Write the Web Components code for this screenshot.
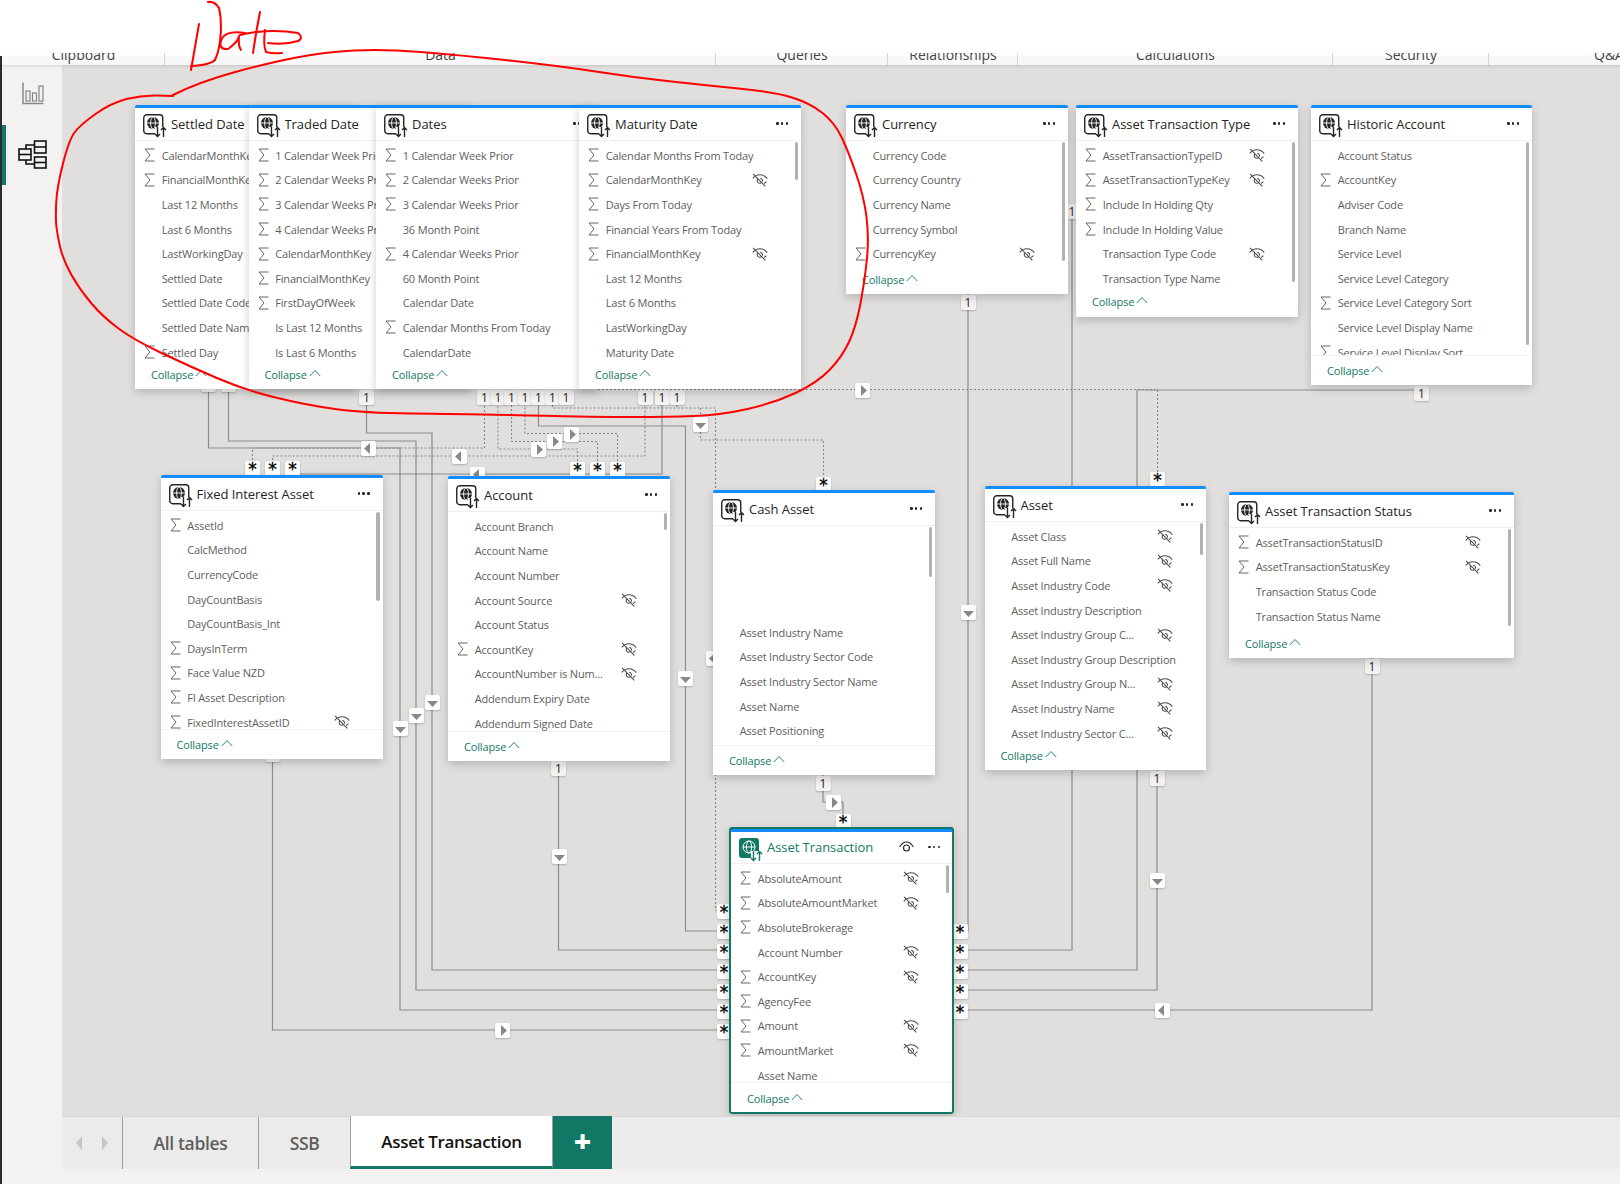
<!DOCTYPE html>
<html lang="en">
<head>
<meta charset="UTF-8" />
<title>Model view</title>
<style>
    html, body { margin: 0; height: 100%; }
    body { font-family: "Open Sans", "Liberation Sans", sans-serif; background: #fff; overflow: hidden; }
</style>
</head>
<body>
<model-app>
    <ribbon-strip slot="ribbon">
        <ribbon-group style="width:163px">Clipboard</ribbon-group>
        <ribbon-group style="width:551px">Data</ribbon-group>
        <ribbon-group style="width:172px">Queries</ribbon-group>
        <ribbon-group style="width:130px">Relationships</ribbon-group>
        <ribbon-group style="width:315px">Calculations</ribbon-group>
        <ribbon-group style="width:156px">Security</ribbon-group>
        <ribbon-group style="width:240px">Q&amp;A</ribbon-group>
    </ribbon-strip>
    <view-rail slot="rail"></view-rail>
    <model-canvas slot="canvas">
        <!-- relation lines: page coordinates, the svg viewBox takes off the canvas origin -->
        <rel-lines></rel-lines>

        <rel-mark x="208.5" y="384">1</rel-mark><rel-mark x="228.5" y="384">1</rel-mark>
        <rel-mark x="366.5" y="397">1</rel-mark>
        <rel-mark x="484.5" y="397">1</rel-mark><rel-mark x="498" y="397">1</rel-mark><rel-mark x="511.5" y="397">1</rel-mark>
        <rel-mark x="525" y="397">1</rel-mark><rel-mark x="538.5" y="397">1</rel-mark><rel-mark x="552.5" y="397">1</rel-mark>
        <rel-mark x="566" y="397">1</rel-mark>
        <rel-mark x="645" y="397">1</rel-mark><rel-mark x="662" y="397">1</rel-mark><rel-mark x="677" y="397">1</rel-mark>
        <rel-mark x="968" y="302">1</rel-mark><rel-mark x="1072" y="211">1</rel-mark><rel-mark x="1421.5" y="393">1</rel-mark>
        <rel-mark x="272.5" y="754">1</rel-mark><rel-mark x="558.5" y="768">1</rel-mark><rel-mark x="823" y="783">1</rel-mark>
        <rel-mark x="1157" y="778">1</rel-mark><rel-mark x="1372" y="666">1</rel-mark>

        <rel-mark x="252.5" y="468" many>*</rel-mark><rel-mark x="272.5" y="468" many>*</rel-mark><rel-mark x="292.5" y="468" many>*</rel-mark>
        <rel-mark x="577.5" y="469" many>*</rel-mark><rel-mark x="597.5" y="469" many>*</rel-mark><rel-mark x="617.5" y="469" many>*</rel-mark>
        <rel-mark x="823.5" y="484" many>*</rel-mark><rel-mark x="1157.5" y="479" many>*</rel-mark><rel-mark x="843" y="821" many>*</rel-mark>
        <rel-mark x="724" y="911" many>*</rel-mark><rel-mark x="724" y="931" many>*</rel-mark><rel-mark x="724" y="951" many>*</rel-mark>
        <rel-mark x="724" y="971" many>*</rel-mark><rel-mark x="724" y="991" many>*</rel-mark><rel-mark x="724" y="1011" many>*</rel-mark>
        <rel-mark x="724" y="1031" many>*</rel-mark>
        <rel-mark x="960" y="931" many>*</rel-mark><rel-mark x="960" y="951" many>*</rel-mark><rel-mark x="960" y="971" many>*</rel-mark>
        <rel-mark x="960" y="991" many>*</rel-mark><rel-mark x="960" y="1011" many>*</rel-mark>

        <rel-mark x="368.5" y="448" dir="left"></rel-mark><rel-mark x="459" y="456" dir="left"></rel-mark><rel-mark x="477" y="474" dir="left"></rel-mark>
        <rel-mark x="538" y="449" dir="right"></rel-mark><rel-mark x="554.5" y="441.5" dir="right"></rel-mark><rel-mark x="571" y="434" dir="right"></rel-mark>
        <rel-mark x="700.5" y="424" dir="down"></rel-mark><rel-mark x="862" y="390" dir="right"></rel-mark>
        <rel-mark x="968" y="612" dir="down"></rel-mark><rel-mark x="685" y="678" dir="down"></rel-mark><rel-mark x="713.5" y="658" dir="left"></rel-mark>
        <rel-mark x="432" y="702" dir="down"></rel-mark><rel-mark x="416" y="715" dir="down"></rel-mark><rel-mark x="400" y="728" dir="down"></rel-mark>
        <rel-mark x="559" y="856" dir="down"></rel-mark><rel-mark x="833" y="802" dir="right"></rel-mark>
        <rel-mark x="502" y="1030" dir="right"></rel-mark><rel-mark x="1157" y="880" dir="down"></rel-mark><rel-mark x="1162" y="1010" dir="left"></rel-mark>

        <table-card x="135" y="105" w="222" h="284" name="Settled Date">
            <table-field sum>CalendarMonthKey</table-field><table-field sum>FinancialMonthKey</table-field>
            <table-field>Last 12 Months</table-field><table-field>Last 6 Months</table-field><table-field>LastWorkingDay</table-field>
            <table-field>Settled Date</table-field><table-field>Settled Date Code</table-field><table-field>Settled Date Name</table-field>
            <table-field sum>Settled Day</table-field>
        </table-card>
        <table-card x="248.5" y="105" w="222" h="284" name="Traded Date">
            <table-field sum>1 Calendar Week Prior</table-field><table-field sum>2 Calendar Weeks Prior</table-field>
            <table-field sum>3 Calendar Weeks Prior</table-field><table-field sum>4 Calendar Weeks Prior</table-field>
            <table-field sum>CalendarMonthKey</table-field><table-field sum>FinancialMonthKey</table-field><table-field sum>FirstDayOfWeek</table-field>
            <table-field>Is Last 12 Months</table-field><table-field>Is Last 6 Months</table-field>
        </table-card>
        <table-card x="376" y="105" w="222" h="284" name="Dates">
            <table-field sum>1 Calendar Week Prior</table-field><table-field sum>2 Calendar Weeks Prior</table-field>
            <table-field sum>3 Calendar Weeks Prior</table-field><table-field>36 Month Point</table-field>
            <table-field sum>4 Calendar Weeks Prior</table-field><table-field>60 Month Point</table-field><table-field>Calendar Date</table-field>
            <table-field sum>Calendar Months From Today</table-field><table-field>CalendarDate</table-field>
        </table-card>
        <table-card x="579" y="105" w="222" h="284" name="Maturity Date" thumb="38">
            <table-field sum>Calendar Months From Today</table-field><table-field sum off>CalendarMonthKey</table-field>
            <table-field sum>Days From Today</table-field><table-field sum>Financial Years From Today</table-field>
            <table-field sum off>FinancialMonthKey</table-field><table-field>Last 12 Months</table-field><table-field>Last 6 Months</table-field>
            <table-field>LastWorkingDay</table-field><table-field>Maturity Date</table-field>
        </table-card>
        <table-card x="846" y="105" w="222" h="189" name="Currency" thumb="119">
            <table-field>Currency Code</table-field><table-field>Currency Country</table-field><table-field>Currency Name</table-field>
            <table-field>Currency Symbol</table-field><table-field sum off>CurrencyKey</table-field>
        </table-card>
        <table-card x="1076" y="105" w="222" h="212" name="Asset Transaction Type" thumb="140" foot="26">
            <table-field sum off>AssetTransactionTypeID</table-field><table-field sum off>AssetTransactionTypeKey</table-field>
            <table-field sum>Include In Holding Qty</table-field><table-field sum>Include In Holding Value</table-field>
            <table-field off>Transaction Type Code</table-field><table-field>Transaction Type Name</table-field>
        </table-card>
        <table-card x="1311" y="105" w="221" h="280" name="Historic Account" thumb="203" clipped>
            <table-field>Account Status</table-field><table-field sum>AccountKey</table-field><table-field>Adviser Code</table-field>
            <table-field>Branch Name</table-field><table-field>Service Level</table-field><table-field>Service Level Category</table-field>
            <table-field sum>Service Level Category Sort</table-field><table-field>Service Level Display Name</table-field>
            <table-field sum>Service Level Display Sort</table-field>
        </table-card>

        <table-card x="160.5" y="475" w="222" h="284" name="Fixed Interest Asset" thumb="89" clipped>
            <table-field sum>AssetId</table-field><table-field>CalcMethod</table-field><table-field>CurrencyCode</table-field>
            <table-field>DayCountBasis</table-field><table-field>DayCountBasis_Int</table-field><table-field sum>DaysInTerm</table-field>
            <table-field sum>Face Value NZD</table-field><table-field sum>FI Asset Description</table-field>
            <table-field sum off>FixedInterestAssetID</table-field>
        </table-card>
        <table-card x="448" y="476" w="222" h="285" name="Account" thumb="17" clipped>
            <table-field>Account Branch</table-field><table-field>Account Name</table-field><table-field>Account Number</table-field>
            <table-field off>Account Source</table-field><table-field>Account Status</table-field><table-field sum off>AccountKey</table-field>
            <table-field off>AccountNumber is Num...</table-field><table-field>Addendum Expiry Date</table-field><table-field>Addendum Signed Date</table-field>
        </table-card>
        <table-card x="713" y="490" w="222" h="285" name="Cash Asset" thumb="50" skip="94" clipped>
            <table-field>Asset Industry Name</table-field><table-field>Asset Industry Sector Code</table-field>
            <table-field>Asset Industry Sector Name</table-field><table-field>Asset Name</table-field><table-field>Asset Positioning</table-field>
        </table-card>
        <table-card x="984.5" y="486" w="221.5" h="284" name="Asset" thumb="32">
            <table-field off>Asset Class</table-field><table-field off>Asset Full Name</table-field><table-field off>Asset Industry Code</table-field>
            <table-field>Asset Industry Description</table-field><table-field off>Asset Industry Group C...</table-field>
            <table-field>Asset Industry Group Description</table-field><table-field off>Asset Industry Group N...</table-field>
            <table-field off>Asset Industry Name</table-field><table-field off>Asset Industry Sector C...</table-field>
        </table-card>
        <table-card x="1229" y="492" w="285" h="166" name="Asset Transaction Status" thumb="97">
            <table-field sum off>AssetTransactionStatusID</table-field><table-field sum off>AssetTransactionStatusKey</table-field>
            <table-field>Transaction Status Code</table-field><table-field>Transaction Status Name</table-field>
        </table-card>
        <table-card x="729" y="827" w="225" h="287" name="Asset Transaction" thumb="28" clipped active>
            <table-field sum off>AbsoluteAmount</table-field><table-field sum off>AbsoluteAmountMarket</table-field>
            <table-field sum>AbsoluteBrokerage</table-field><table-field off>Account Number</table-field>
            <table-field sum off>AccountKey</table-field><table-field sum>AgencyFee</table-field>
            <table-field sum off>Amount</table-field><table-field sum off>AmountMarket</table-field><table-field>Asset Name</table-field>
        </table-card>
    </model-canvas>
    <tab-bar slot="tabs">
        <layout-tab>All tables</layout-tab>
        <layout-tab style="width:92px">SSB</layout-tab>
        <layout-tab current style="width:203px">Asset Transaction</layout-tab>
    </tab-bar>
</model-app>
<red-ink></red-ink>

<script type="module">
    // origin of the canvas on the page
    const CX = 62, CY = 65;

    class ModelApp extends HTMLElement {
        constructor() {
            super();
            this.attachShadow({ mode: 'open' }).innerHTML = `
                <style>
                    :host { display: flex; flex-direction: column; height: 1184px; }
                    .top { height: 53px; flex: none; background: #fff; }
                    .main { flex: 1; min-height: 0; display: flex; border-left: 2px solid #2b2b2b; }
                    .col { flex: 1; min-width: 0; display: flex; flex-direction: column; }
                    .foot { height: 15px; flex: none; background: #f3f2f1; border-left: 2px solid #2b2b2b; }
                    slot[name=canvas]::slotted(*) { flex: 1; }
                </style>
                <div class="top"></div>
                <slot name="ribbon"></slot>
                <div class="main">
                    <slot name="rail"></slot>
                    <div class="col">
                        <slot name="canvas"></slot>
                        <slot name="tabs"></slot>
                    </div>
                </div>
                <div class="foot"></div>`;
        }
    }

    class RibbonStrip extends HTMLElement {
        constructor() {
            super();
            this.attachShadow({ mode: 'open' }).innerHTML = `
                <style>
                    :host { display: flex; height: 12px; flex: none; overflow: hidden; position: relative; z-index: 2;
                            background: linear-gradient(#fff 3px, #f9f8f8 3px); padding-left: 2px;
                            box-shadow: 0 1px 3px rgba(0,0,0,.12); }
                    :host::before { content: ""; position: absolute; left: 0; top: 3px; bottom: 0; width: 2px; background: #2b2b2b; }
                </style>
                <slot></slot>`;
        }
    }

    class RibbonGroup extends HTMLElement {
        constructor() {
            super();
            this.attachShadow({ mode: 'open' }).innerHTML = `
                <style>
                    :host { display: block; flex: none; box-sizing: border-box; text-align: center; color: #444; height: 22px;
                            font: 14px/14px "Open Sans", "Liberation Sans", sans-serif; margin-top: -5px;
                            white-space: nowrap; }
                    :host(:not(:last-child)) { box-shadow: inset -1px 0 0 #d6d4d2; }
                </style>
                <slot></slot>`;
        }
    }

    class ViewRail extends HTMLElement {
        constructor() {
            super();
            this.attachShadow({ mode: 'open' }).innerHTML = `
                <style>
                    :host { display: block; width: 60px; flex: none; background: #f3f2f1; }
                    .item { height: 60px; display: flex; align-items: center; justify-content: center; box-sizing: border-box; padding-left: 1px; }
                    .item.on { box-shadow: inset 4px 0 0 #117865; padding-bottom: 2px; }
                    .report { padding-bottom: 4px; }
                </style>
                <div class="item report">
                    <svg width="22" height="23" viewBox="0 0 22 23" fill="none" stroke="#8a8886" stroke-width="1.2">
                        <path d="M1 0.5V21.5H21.5" stroke-width="1.5"/>
                        <rect x="4" y="9" width="4" height="10"/>
                        <rect x="10.5" y="11" width="4" height="8"/>
                        <rect x="17" y="4" width="4" height="15"/>
                    </svg>
                </div>
                <div class="item on">
                    <svg width="29" height="29" viewBox="0 0 29 29" fill="none" stroke="#111" stroke-width="1.6">
                        <rect x="1" y="9" width="12" height="11"/><path d="M1 14.5H13"/>
                        <rect x="16.5" y="1" width="11.5" height="12"/><path d="M16.5 7H28"/>
                        <rect x="16.5" y="17" width="11.5" height="11"/><path d="M16.5 22.5H28"/>
                        <path d="M8 9V5H16.5M8 20V24H16.5"/>
                    </svg>
                </div>`;
        }
    }

    class ModelCanvas extends HTMLElement {
        constructor() {
            super();
            this.attachShadow({ mode: 'open' }).innerHTML = `
                <style>
                    :host { display: block; position: relative; overflow: hidden; min-height: 0; background: #e0dfdd; }
                </style>
                <slot></slot>`;
        }
    }

    // every relation is one polyline, in page coordinates
    const SOLID = [
        '208.5,389 208.5,448 400,448 400,1010 729,1010',
        '228.5,389 228.5,441 416,441 416,990 729,990',
        '366.5,397 366.5,433 432,433 432,970 729,970',
        '272.5,759 272.5,1030 729,1030',
        '558.5,761 558.5,950 729,950',
        '538.5,397 538.5,426 685.5,426 685.5,931 729,931',
        '662,397 662,474 292.5,474',
        '968,294 968,931 954,931',
        '1072,211 1072,950 954,950',
        '1421.5,390 1137,390 1137,970 954,970',
        '1157,770 1157,990 954,990',
        '1372,658 1372,1010 954,1010',
        '823,775 823,802 843,802 843,827'
    ];
    const DOTTED = [
        '252.5,468 252.5,448 484.5,448 484.5,397',
        '272.5,468 272.5,456 645,456 645,397',
        '577.5,469 577.5,449 498,449 498,397',
        '597.5,469 597.5,441.5 511.5,441.5 511.5,397',
        '617.5,469 617.5,433.5 525,433.5 525,397',
        '552.5,397 552.5,408 715.5,408 715.5,911',
        '677,397 677,408',
        '700.5,408 700.5,440 823.5,440 823.5,490',
        '598,389.5 1157.5,389.5 1157.5,486'
    ];

    class RelLines extends HTMLElement {
        constructor() {
            super();
            const poly = (pts, cls) => `<polyline class="${cls}" points="${pts}"/>`;
            this.attachShadow({ mode: 'open' }).innerHTML = `
                <style>
                    :host { position: absolute; left: 0; top: 0; display: block; }
                    svg { display: block; }
                    polyline { fill: none; stroke: #8f8d8b; stroke-width: 1.2; }
                    .d { stroke: #8a8886; stroke-width: 1.1; stroke-dasharray: 2 2; }
                </style>
                <svg width="1558" height="1051" viewBox="${CX} ${CY} 1558 1051">
                    ${SOLID.map(p => poly(p, 's')).join('')}
                    ${DOTTED.map(p => poly(p, 'd')).join('')}
                </svg>`;
        }
    }

    // cardinality badge or cross-filter arrow, centred on x,y
    class RelMark extends HTMLElement {
        constructor() {
            super();
            const tri = { left: '9,2 9,13 3,7.5', right: '6,2 6,13 12,7.5', down: '2,6 13,6 7.5,12' };
            const dir = this.getAttribute('dir');
            this.attachShadow({ mode: 'open' }).innerHTML = `
                <style>
                    :host { position: absolute; display: flex; align-items: center; justify-content: center;
                            width: 15px; height: 15px; margin: -7.5px 0 0 -7.5px; border-radius: 2px;
                            background: #f4f3f2; color: #252423; box-shadow: 0 1px 2px rgba(0,0,0,.22);
                            font: 500 12px/15px "Open Sans", "Liberation Sans", sans-serif; }
                    :host([many]), :host([dir]) { background: #fff; }
                    :host([many]) { font: 17px/15px "DejaVu Sans", sans-serif; color: #000; -webkit-text-stroke: .35px #000;
                            padding-top: 3px; height: 12px; overflow: hidden; }
                    svg { display: block; }
                </style>
                ${dir ? `<svg width="15" height="15"><polygon points="${tri[dir]}" fill="#8a8886"/></svg>` : '<slot></slot>'}`;
            this.style.left = (this.getAttribute('x') - CX) + 'px';
            this.style.top = (this.getAttribute('y') - CY) + 'px';
        }
    }

    const tableIcon = active => {
        const c = active ? '#117865' : '#252423';
        const box = active
            ? `<rect x="0" y="0" width="20" height="20" rx="3" fill="${c}"/>`
            : `<rect x=".75" y=".75" width="19" height="19" rx="3" fill="none" stroke="${c}" stroke-width="1.4"/>`;
        const globe = active
            ? `<g fill="none" stroke="#fff" stroke-width="1"><circle cx="10" cy="9" r="6"/><ellipse cx="10" cy="9" rx="2.6" ry="6"/><path d="M4 9H16"/></g>`
            : `<circle cx="10" cy="9" r="6" fill="${c}"/><g fill="none" stroke="#fff" stroke-width=".9"><ellipse cx="10" cy="9" rx="2.4" ry="6"/><path d="M4 9H16"/></g>`;
        return `<svg width="24" height="24" viewBox="0 0 24 24">${box}${globe}
            <rect x="12" y="13" width="12" height="11" fill="#fff"/>
            <path d="M14.5 13V22.5M12 20l2.5 2.5L17 20M20.5 23V13.5M18 16l2.5-2.5L23 16" fill="none" stroke="${c}" stroke-width="1.4"/></svg>`;
    };

    class TableCard extends HTMLElement {
        constructor() {
            super();
            const a = n => this.getAttribute(n);
            const active = this.hasAttribute('active');
            const clipped = this.hasAttribute('clipped');
            const thumb = a('thumb');
            const skip = a('skip') || 2;
            const eye = active ? `<svg class="seen" width="15" height="12" viewBox="0 0 15 12" fill="none" stroke="#252423" stroke-width="1.1">
                    <path d="M.7 6C2.5 2.6 5 1 7.5 1s5 1.6 6.8 5"/><circle cx="7.5" cy="7" r="3"/></svg>` : '';
            this.attachShadow({ mode: 'open' }).innerHTML = `
                <style>
                    :host { position: absolute; display: flex; flex-direction: column; box-sizing: border-box; background: #fff;
                            border-top: 3px solid #118dff; border-radius: 2px 2px 0 0;
                            box-shadow: 0 3px 10px rgba(0,0,0,.2);
                            font-family: "Open Sans", "Liberation Sans", sans-serif; }
                    :host([active]) { outline: 2px solid #117865; outline-offset: -2px; border-radius: 3px; border-top: 0; padding: 2px; }
                    .bar { display: none; height: 3px; background: #118dff; flex: none; }
                    :host([active]) .bar { display: block; }
                    header { flex: none; height: 33px; box-sizing: border-box; display: flex; align-items: center;
                             padding: 0 13px 1px 8px; border-bottom: 1px solid #f0efee; color: #252423;
                             font-size: 13px; letter-spacing: -.05px; white-space: nowrap; }
                    :host([active]) header { height: 32px; color: #117865; padding-left: 8px; padding-right: 12px; }
                    .icon { width: 24px; height: 24px; margin: 5px 4px 0 0; flex: none; }
                    .name { flex: 1; min-width: 0; overflow: hidden; }
                    .seen { margin-right: 14px; flex: none; }
                    .more { width: 12px; flex: none; display: flex; justify-content: space-between; }
                    .more i { width: 2.5px; height: 2.5px; border-radius: 50%; background: #252423; }
                    main { flex: 1; min-height: 0; overflow: hidden; position: relative; padding-top: ${skip}px; }
                    :host([clipped]) main { border-bottom: 1px solid #f3f2f1; }
                    .thumb { position: absolute; top: 1px; right: 3px; width: 3.5px; height: ${thumb || 0}px; background: #b3b1af; border-radius: 2px; }
                    footer { flex: none; height: ${clipped ? 29 : (a('foot') || 25)}px; box-sizing: border-box;
                             display: flex; align-items: flex-start; gap: 2px; padding: ${clipped ? 4 : 0}px 0 0 16px;
                             color: #117865; font-size: 11px; line-height: 22px; letter-spacing: -.15px; }
                    :host([active]) footer { padding-top: 5px; }
                    footer svg { margin-top: 5px; }
                </style>
                <div class="bar"></div>
                <header>
                    <div class="icon">${tableIcon(active)}</div>
                    <div class="name">${a('name')}</div>
                    ${eye}
                    <div class="more"><i></i><i></i><i></i></div>
                </header>
                <main><slot></slot><div class="thumb"></div></main>
                <footer>Collapse <svg width="12" height="8" viewBox="0 0 12 8" fill="none" stroke="#117865" stroke-width=".9"><path d="M.8 7L6 1.5 11.2 7"/></svg></footer>`;
            this.style.left = (a('x') - CX) + 'px';
            this.style.top = (a('y') - CY) + 'px';
            this.style.width = a('w') + 'px';
            this.style.height = a('h') + 'px';
        }
    }

    class TableField extends HTMLElement {
        constructor() {
            super();
            const sum = this.hasAttribute('sum');
            const off = this.hasAttribute('off');
            this.attachShadow({ mode: 'open' }).innerHTML = `
                <style>
                    :host { display: flex; align-items: center; height: 24.6px; color: #605e5c; font-size: 11px; letter-spacing: -.16px; white-space: nowrap; }
                    .sig { width: 26.7px; flex: none; padding-left: 9px; box-sizing: border-box; display: flex; }
                    .txt { flex: 1; min-width: 0; overflow: visible; }
                    .off { flex: none; margin-right: 33px; display: flex; }
                </style>
                <div class="sig">${sum ? `<svg width="11" height="14" viewBox="0 0 11 14" fill="none" stroke="#605e5c" stroke-width=".95"><path d="M10.5 1H1L6 7 1 13H10.5"/></svg>` : ''}</div>
                <div class="txt"><slot></slot></div>
                ${off ? `<div class="off"><svg width="16" height="14" viewBox="0 0 15 13" fill="none" stroke="#4d4b49" stroke-width="1">
                    <path d="M.7 5C2.6 2.6 5 1.6 7.5 1.6s4.9 1 6.8 3.6"/><path d="M5.5 5.5a2.4 2.4 0 0 0 3.6 3.2M9.8 8a2.4 2.4 0 0 0-2-3"/><path d="M13.5 8c-.7.8-1.4 1.3-2.2 1.8M1 .8L12.5 12.4"/></svg></div>` : ''}`;
        }
    }

    class TabBar extends HTMLElement {
        constructor() {
            super();
            this.attachShadow({ mode: 'open' }).innerHTML = `
                <style>
                    :host { display: flex; flex: none; height: 53px; box-sizing: border-box; background: #ebebeb; border-top: 1px solid #d8d7d5; }
                    .nav { width: 60px; flex: none; display: flex; align-items: center; justify-content: space-around; padding: 0 4px; box-sizing: border-box; }
                    .add { width: 59px; flex: none; margin-top: -1px; background: #117865; color: #fff; display: flex; align-items: center; justify-content: center;
                           padding-bottom: 3px; box-sizing: border-box; font: 800 30px/1 "Open Sans", "Liberation Sans", sans-serif; }
                </style>
                <div class="nav">
                    <svg width="8" height="16"><polygon points="7,1 7,15 1,8" fill="#c8c6c4"/></svg>
                    <svg width="8" height="16"><polygon points="1,1 1,15 7,8" fill="#c8c6c4"/></svg>
                </div>
                <slot></slot>
                <div class="add">+</div>`;
        }
    }

    class LayoutTab extends HTMLElement {
        constructor() {
            super();
            this.attachShadow({ mode: 'open' }).innerHTML = `
                <style>
                    :host { display: flex; width: 136px; flex: none; box-sizing: border-box; align-items: center; justify-content: center;
                            border-left: 1px solid #a19f9d; color: #605e5c; padding-top: 2px;
                            font: 600 17.5px/1 "Open Sans", "Liberation Sans", sans-serif; letter-spacing: -.35px; }
                    :host([current]) { background: #fff; color: #111; margin-top: -1px; padding-top: 0; font-size: 17px; letter-spacing: -.3px;
                            border-bottom: 3px solid #117865; border-right: 1px solid #a19f9d; }
                </style>
                <slot></slot>`;
        }
    }

    // marker strokes over the screenshot
    const LOOP = [[173,95],[199,82],[268,63],[325,52],[383,49],[459,55],[560,66],[631,77],[703,85],[774,92],[810,103],[835,123],[849,153],
        [864,197],[869,237],[865,280],[856,327],[842,357],[817,383],[774,403],[721,415],[667,417],[600,417],[459,414],[364,413],[306,405],
        [245,390],[191,367],[134,340],[103,317],[80,290],[63,260],[57,233],[55.5,217],[57,187],[69,140],[80,125],[111,103],[142,95],[173,96]];
    const smooth = pts => {
        let d = `M${pts[0][0]} ${pts[0][1]}`;
        for (let i = 1; i < pts.length - 1; i++) {
            const mx = (pts[i][0] + pts[i + 1][0]) / 2, my = (pts[i][1] + pts[i + 1][1]) / 2;
            d += `Q${pts[i][0]} ${pts[i][1]} ${mx} ${my}`;
        }
        const l = pts[pts.length - 1];
        return d + `L${l[0]} ${l[1]}`;
    };

    class RedInk extends HTMLElement {
        constructor() {
            super();
            this.attachShadow({ mode: 'open' }).innerHTML = `
                <style>
                    :host { position: absolute; left: 0; top: 0; display: block; pointer-events: none; z-index: 5; }
                    svg { display: block; }
                    path { fill: none; stroke: #f00; stroke-width: 2; stroke-linejoin: round; stroke-linecap: round; }
                </style>
                <svg width="1620" height="1184">
                    <path d="${smooth(LOOP)}"/>
                    <path d="M199 24L191 70"/>
                    <path d="M191 66Q210 65 215 60C222 45 222 20 219 8Q215 1 208 2"/>
                    <path d="M245 33Q228 30 222 38Q217 50 228 49Q238 42 239 36Q238 46 241 50"/>
                    <path d="M260 12Q256 32 253 53"/>
                    <path d="M240 35Q270 28 298 33Q304 38 298 41Q285 45 268 43"/>
                    <path d="M265 30Q263 45 266 52Q272 54 282 53"/>
                </svg>`;
        }
    }

    customElements.define('model-app', ModelApp);
    customElements.define('ribbon-strip', RibbonStrip);
    customElements.define('ribbon-group', RibbonGroup);
    customElements.define('view-rail', ViewRail);
    customElements.define('model-canvas', ModelCanvas);
    customElements.define('rel-lines', RelLines);
    customElements.define('rel-mark', RelMark);
    customElements.define('table-card', TableCard);
    customElements.define('table-field', TableField);
    customElements.define('tab-bar', TabBar);
    customElements.define('layout-tab', LayoutTab);
    customElements.define('red-ink', RedInk);
</script>
</body>
</html>
